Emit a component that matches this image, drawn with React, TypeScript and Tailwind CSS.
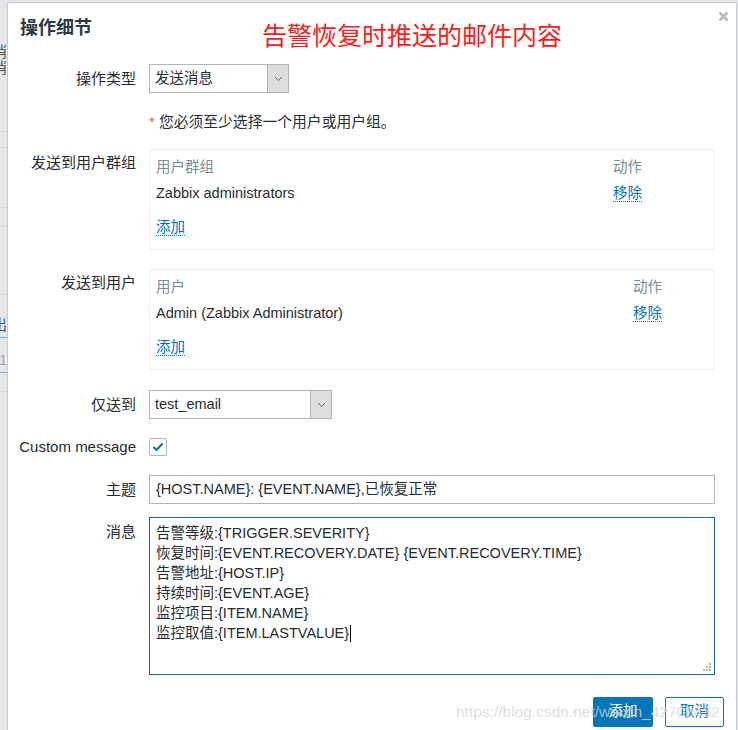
import React from "react";

const FONT = "font-['Liberation_Sans','Noto_Sans_CJK_SC',sans-serif]";

const Chevron: React.FC = () => (
  <svg width="9" height="6" viewBox="0 0 9 6" fill="none">
    <polyline points="1,1 4.5,4.5 8,1" stroke="#5b6770" strokeWidth="1" />
  </svg>
);

const Select: React.FC<{ value: string; width: string }> = ({ value, width }) => (
  <div className={`flex h-[29px] ${width} border border-[#acb6bd] bg-white`}>
    <div className="flex flex-1 items-center pl-[5px] text-[#1f2c33]">{value}</div>
    <div className="flex w-[21px] items-center justify-center border-l border-[#acb6bd] bg-[#dedede]">
      <Chevron />
    </div>
  </div>
);

const Link: React.FC<{ children: React.ReactNode }> = ({ children }) => (
  <span className="border-b border-dotted border-[#0275b8] leading-[18px] text-[#0275b8]">{children}</span>
);

interface BoxProps {
  head: string;
  row: string;
  nameWidth: string;
}

const ListBox: React.FC<BoxProps> = ({ head, row, nameWidth }) => (
  <div className="flex h-[101px] w-[566px] flex-col border border-[#ebebeb] pl-[6px] pt-[7px]">
    <div className="flex leading-[20px] text-[#768d99]">
      <div className={nameWidth}>{head}</div>
      <div>动作</div>
    </div>
    <div className="mt-[6px] flex leading-[20px] text-[#1f2c33]">
      <div className={nameWidth}>{row}</div>
      <div>
        <Link>移除</Link>
      </div>
    </div>
    <div className="mt-[14px] leading-[20px]">
      <Link>添加</Link>
    </div>
  </div>
);

const Label: React.FC<{ children: React.ReactNode; className?: string }> = ({ children, className = "" }) => (
  <div className={`w-[119px] shrink-0 whitespace-nowrap text-right text-[15px] leading-[20px] text-[#1f2c33] ${className}`}>
    {children}
  </div>
);

const messageLines = [
  "告警等级:{TRIGGER.SEVERITY}",
  "恢复时间:{EVENT.RECOVERY.DATE} {EVENT.RECOVERY.TIME}",
  "告警地址:{HOST.IP}",
  "持续时间:{EVENT.AGE}",
  "监控项目:{ITEM.NAME}",
  "监控取值:{ITEM.LASTVALUE}",
];

export default function App() {
  return (
    <div className={`flex h-[730px] w-[738px] overflow-hidden bg-[#e4e8eb] text-[14.5px] ${FONT}`}>
      {/* page behind the dialog */}
      <div className="flex w-[7px] shrink-0 flex-col items-end overflow-hidden text-[#4a5560]">
        <div className="mt-[44px] whitespace-nowrap leading-[16px]">消</div>
        <div className="whitespace-nowrap leading-[16px]">消</div>
        <div className="mt-[55px] h-px w-full bg-[#d3d9de]" />
        <div className="mt-[15px] h-px w-full bg-[#d3d9de]" />
        <div className="mt-[59px] h-px w-full bg-[#d3d9de]" />
        <div className="mt-[18px] h-px w-full bg-[#d3d9de]" />
        <div className="mt-[67px] h-px w-full bg-[#d3d9de]" />
        <div className="mt-[22px] whitespace-nowrap leading-[16px]">出</div>
        <div className="mt-[4px] h-px w-full bg-[#7fb3d5]" />
        <div className="mt-[14px] whitespace-nowrap leading-[16px] text-[#9aa4ab]">1</div>
        <div className="mt-[4px] h-px w-full bg-[#7fb3d5]" />
        <div className="mt-[18px] h-px w-full bg-[#d3d9de]" />
      </div>

      {/* dialog */}
      <div className="relative mt-[2px] h-[740px] w-[730px] shrink-0 border-l border-r border-t border-[#c6ced4] bg-white pl-[9px] pr-[21px]">
        <button className="absolute right-[7px] top-[8px] flex h-[11px] w-[11px] items-center justify-center">
          <svg width="11" height="11" viewBox="0 0 11 11">
            <path d="M1.5 1.5 L9.5 9.5 M9.5 1.5 L1.5 9.5" stroke="#b3bcc3" strokeWidth="2.6" />
          </svg>
        </button>

        <div className="flex items-start pt-[13px]">
          <div className="pl-[3px] text-[18px] font-bold leading-[24px] text-[#2b3a45]">操作细节</div>
          <div className="ml-[170px] mt-[5px] text-[25px] leading-[30px] text-[#ff1a1a]">告警恢复时推送的邮件内容</div>
        </div>

        <div className="mt-[13px] flex items-center">
          <Label>操作类型</Label>
          <div className="ml-[13px]">
            <Select value="发送消息" width="w-[140px]" />
          </div>
        </div>

        <div className="ml-[132px] mt-[19px] text-[14.8px] leading-[20px] text-[#1f2c33]">
          <span className="text-[#e45959]">*</span> 您必须至少选择一个用户或用户组。
        </div>

        <div className="mt-[17px] flex">
          <Label className="pt-[4px]">发送到用户群组</Label>
          <div className="ml-[13px]">
            <ListBox head="用户群组" row="Zabbix administrators" nameWidth="w-[457px]" />
          </div>
        </div>

        <div className="mt-[19px] flex">
          <Label className="pt-[4px]">发送到用户</Label>
          <div className="ml-[13px]">
            <ListBox head="用户" row="Admin (Zabbix Administrator)" nameWidth="w-[477px]" />
          </div>
        </div>

        <div className="mt-[20px] flex items-center">
          <Label>仅送到</Label>
          <div className="ml-[13px]">
            <Select value="test_email" width="w-[183px]" />
          </div>
        </div>

        <div className="mt-[18px] flex items-center">
          <Label>Custom message</Label>
          <div className="ml-[13px] flex h-[18px] w-[18px] items-center justify-center rounded-[2px] border border-[#acb6bd]">
            <svg width="12" height="10" viewBox="0 0 12 10" fill="none">
              <polyline points="1.5,5 4.5,8 10.5,1.5" stroke="#0275b8" strokeWidth="2" />
            </svg>
          </div>
        </div>

        <div className="mt-[18px] flex items-center">
          <Label>主题</Label>
          <div className="ml-[13px] flex h-[29px] w-[566px] items-center border border-[#acb6bd] pl-[6px] text-[#1f2c33]">
            {"{HOST.NAME}: {EVENT.NAME},已恢复正常"}
          </div>
        </div>

        <div className="mt-[13px] flex">
          <Label className="pt-[5px]">消息</Label>
          <div className="relative ml-[13px] h-[158px] w-[566px] border border-[#1d6ba3] pl-[6px] pt-[5px] text-[#1f2c33]">
            {messageLines.map((line, i) => (
              <div key={i} className="flex items-center whitespace-pre leading-[20px]">
                {line}
                {i === messageLines.length - 1 && <span className="ml-px h-[17px] w-px bg-black" />}
              </div>
            ))}
            <svg className="absolute bottom-[2px] right-[2px]" width="9" height="9" viewBox="0 0 9 9">
              <rect x="6" y="0" width="2" height="2" fill="#b5b5b5" />
              <rect x="3" y="3" width="2" height="2" fill="#b5b5b5" />
              <rect x="6" y="3" width="2" height="2" fill="#b5b5b5" />
              <rect x="0" y="6" width="2" height="2" fill="#b5b5b5" />
              <rect x="3" y="6" width="2" height="2" fill="#b5b5b5" />
              <rect x="6" y="6" width="2" height="2" fill="#b5b5b5" />
            </svg>
          </div>
        </div>

        <div className="-mr-[9px] mt-[22px] flex justify-end gap-[12px]">
          <button className="h-[30px] w-[60px] rounded-[2px] bg-[#0275b8] text-white">添加</button>
          <button className="h-[30px] w-[59px] rounded-[2px] border border-[#0275b8] bg-white text-[#0275b8]">取消</button>
        </div>

        <div className="pointer-events-none absolute left-[448px] top-[698px] whitespace-nowrap text-[15.5px] leading-[22px] text-[#d4d4d4]/80">
          https://blog.csdn.net/weixin_42708432
        </div>
      </div>
    </div>
  );
}
